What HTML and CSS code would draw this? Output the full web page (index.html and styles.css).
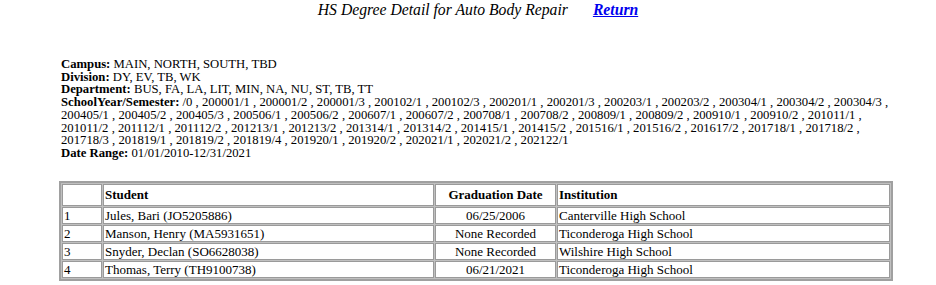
FILE: index.html
```html
<!DOCTYPE html>
<html>
<head>
<meta charset="utf-8">
<title>HS Degree Detail</title>
<link rel="stylesheet" href="styles.css">
</head>
<body>
<div class="title-bar">
  <span class="title">HS Degree Detail for Auto Body Repair</span>
  <a class="return" href="#">Return</a>
</div>
<div class="params">
  <div><b>Campus:</b> MAIN, NORTH, SOUTH, TBD</div>
  <div><b>Division:</b> DY, EV, TB, WK</div>
  <div><b>Department:</b> BUS, FA, LA, LIT, MIN, NA, NU, ST, TB, TT</div>
  <div><b>SchoolYear/Semester:</b> /0 , 200001/1 , 200001/2 , 200001/3 , 200102/1 , 200102/3 , 200201/1 , 200201/3 , 200203/1 , 200203/2 , 200304/1 , 200304/2 , 200304/3 , 200405/1 , 200405/2 , 200405/3 , 200506/1 , 200506/2 , 200607/1 , 200607/2 , 200708/1 , 200708/2 , 200809/1 , 200809/2 , 200910/1 , 200910/2 , 201011/1 , 201011/2 , 201112/1 , 201112/2 , 201213/1 , 201213/2 , 201314/1 , 201314/2 , 201415/1 , 201415/2 , 201516/1 , 201516/2 , 201617/2 , 201718/1 , 201718/2 , 201718/3 , 201819/1 , 201819/2 , 201819/4 , 201920/1 , 201920/2 , 202021/1 , 202021/2 , 202122/1</div>
  <div><b>Date Range:</b> 01/01/2010-12/31/2021</div>
</div>
<table class="grid">
  <thead>
    <tr>
      <th class="c-num"></th>
      <th class="c-student">Student</th>
      <th class="c-date">Graduation Date</th>
      <th class="c-inst">Institution</th>
    </tr>
  </thead>
  <tbody>
    <tr><td>1</td><td>Jules, Bari (JO5205886)</td><td class="center">06/25/2006</td><td>Canterville High School</td></tr>
    <tr><td>2</td><td>Manson, Henry (MA5931651)</td><td class="center">None Recorded</td><td>Ticonderoga High School</td></tr>
    <tr><td>3</td><td>Snyder, Declan (SO6628038)</td><td class="center">None Recorded</td><td>Wilshire High School</td></tr>
    <tr><td>4</td><td>Thomas, Terry (TH9100738)</td><td class="center">06/21/2021</td><td>Ticonderoga High School</td></tr>
  </tbody>
</table>
</body>
</html>
```
FILE: styles.css
```css
html, body {
  margin: 0;
  padding: 0;
  background: #ffffff;
  color: #000000;
  font-family: "Liberation Serif", "Times New Roman", serif;
}
body {
  padding: 1px 0 0 0;
}
.title-bar {
  display: flex;
  justify-content: center;
  gap: 25px;
  padding-left: 20px;
  font-size: 15.7px;
  line-height: 18px;
}
.title {
  font-style: italic;
}
.return {
  font-style: italic;
  font-weight: bold;
  color: #0000ee;
  text-decoration: underline;
}
.params {
  margin: 39px 0 0 61px;
  width: 836px;
  font-size: 12.7px;
  line-height: 12.7px;
}
.grid {
  margin: 21px 0 0 59px;
  width: 834px;
  border-collapse: separate;
  border-spacing: 1px;
  background: #c0c0c0;
  border: 2px solid #a0a0a0;
  font-size: 13px;
}
.grid th, .grid td {
  background: #ffffff;
  border: 1px solid #9a9a9a;
  padding: 0 1px;
  line-height: 15px;
  text-align: left;
}
.grid th {
  height: 20px;
  font-weight: bold;
}
.grid th.c-date, .grid td.center {
  text-align: center;
}
.c-num { width: 36px; }
.c-student { width: 327px; }
.c-date { width: 117px; }
```
